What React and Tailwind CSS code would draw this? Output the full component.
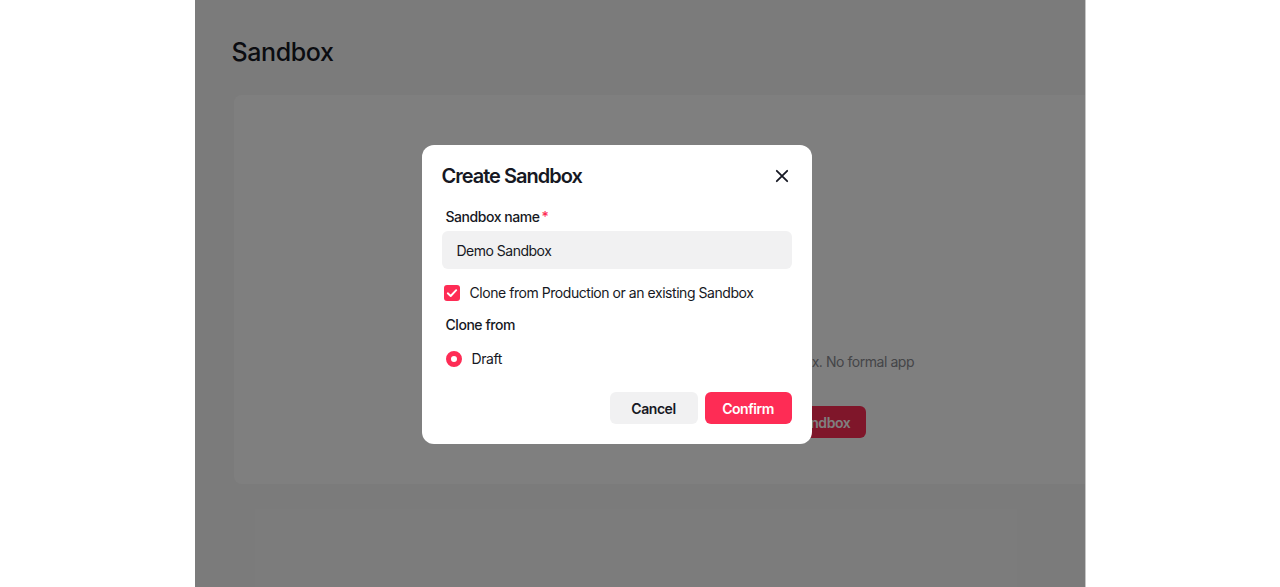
import React, { useState } from 'react'

const font = { fontFamily: 'Inter, "Noto Sans", Arial, sans-serif' }

const CloseIcon = () => (
  <svg width="16" height="16" viewBox="0 0 16 16" fill="none">
    <path d="M2.8 2.8L13.2 13.2M13.2 2.8L2.8 13.2" stroke="#161823" strokeWidth="1.8" strokeLinecap="round" />
  </svg>
)

const CheckIcon = () => (
  <svg width="12" height="12" viewBox="0 0 12 12" fill="none">
    <path d="M1.8 6.3L4.7 9L10.2 3.2" stroke="white" strokeWidth="1.9" strokeLinecap="round" strokeLinejoin="round" />
  </svg>
)

const CreateSandboxModal = () => {
  const [name, setName] = useState('Demo Sandbox')
  const [clone, setClone] = useState(true)

  return (
    <div className="w-[390px] rounded-xl bg-white px-5 pt-5 pb-[20px] tracking-[-0.45px]">
      <div className="flex items-center justify-between h-[22px]">
        <h2 className="text-[20px] font-semibold text-[#161823] tracking-[-1px]">Create Sandbox</h2>
        <button className="w-5 h-5 flex items-center justify-center"><CloseIcon /></button>
      </div>

      <div className="mt-[20px] pl-1 text-[14px] font-medium text-[#161823] leading-[20px]">
        Sandbox name<span className="text-[#fe2c55] ml-[2px]">*</span>
      </div>
      <input
        className="mt-[4px] w-full h-[38px] rounded-md bg-[#f1f1f2] px-[15px] text-[14px] text-[#161823] outline-none tracking-[-0.5px]"
        value={name}
        onChange={(e) => setName(e.target.value)}
      />

      <label className="mt-[14px] flex items-center gap-[10px] pl-[2px] cursor-pointer">
        <span
          onClick={() => setClone(!clone)}
          className="w-4 h-4 rounded-[3px] bg-[#fe2c55] flex items-center justify-center"
        >
          {clone && <CheckIcon />}
        </span>
        <span className="text-[14px] text-[#161823] leading-[20px]">Clone from Production or an existing Sandbox</span>
      </label>

      <div className="mt-[12px] pl-1 text-[14px] font-medium text-[#161823] leading-[20px]">Clone from</div>

      <div className="mt-[14px] flex items-center gap-[10px] pl-[4px]">
        <span className="w-4 h-4 rounded-full border-[5px] border-[#fe2c55] bg-white"></span>
        <span className="text-[14px] text-[#161823] leading-[20px]">Draft</span>
      </div>

      <div className="mt-[23px] flex justify-end gap-[7px]">
        <button className="w-[88px] h-8 rounded-md bg-[#f1f1f2] text-[14px] font-semibold text-[#161823]">Cancel</button>
        <button className="w-[87px] h-8 rounded-md bg-[#fe2c55] text-[14px] font-semibold text-white">Confirm</button>
      </div>
    </div>
  )
}

const App = () => {
  return (
    <div className="w-full h-[587px] bg-white overflow-hidden" style={font}>
      <div className="mx-auto flex w-[891px] h-full">
        <div className="relative w-[890px] h-full bg-[#f7f7f7] overflow-hidden">
          <div className="pl-[37px] pt-[36px]">
            <h1 className="text-[25px] font-medium text-[#161823] leading-[32px] tracking-[-0.4px]">Sandbox</h1>
            <div className="mt-[27px] ml-[2px] w-[851px] h-[389px] rounded-l-lg bg-white pt-[257px] pl-[429px] tracking-[-0.45px]">
              <p className="text-[14px] text-[#8a8b91] leading-[20px]">Create your first sandbox. No formal app</p>
              <button className="mt-[34px] ml-[70px] h-8 px-4 rounded-md bg-[#fe2c55] text-[14px] font-semibold text-white">Create Sandbox</button>
            </div>
          </div>

          <div className="absolute inset-0 bg-black/50 pt-[145px] pl-[227px]">
            <CreateSandboxModal />
          </div>
        </div>
        <div className="w-px h-full bg-[#c6c6c6]"></div>
      </div>
    </div>
  )
}

export default App
